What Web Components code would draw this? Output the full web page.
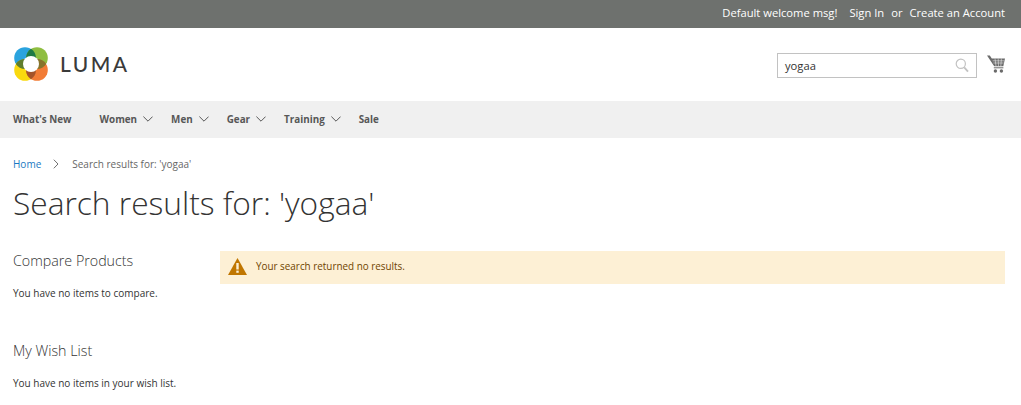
<!DOCTYPE html>
<html lang="en">
<head>
<meta charset="utf-8">
<title>Search results</title>
<style>
  html, body { margin: 0; padding: 0; background: #fff; overflow: hidden; }
  body { font-family: "Open Sans", sans-serif; color: #333; font-size: 10px; width: 1021px; height: 405px; }
</style>
</head>
<body>
<luma-topbar></luma-topbar>
<luma-header></luma-header>
<luma-nav></luma-nav>
<luma-main></luma-main>

<script>
class LumaTopbar extends HTMLElement {
  connectedCallback() {
    this.attachShadow({ mode: "open" }).innerHTML = `
    <style>
      :host {
        display: flex;
        justify-content: flex-end;
        align-items: center;
        box-sizing: border-box;
        height: 28px;
        padding: 0 16px 3px 0;
        background: #6e716e;
        color: #fff;
        font-size: 11.2px;
      }
      span { white-space: pre; }
      .or { margin: 0 7px; }
      .welcome { margin-right: 12px; }
    </style>
    <span class="welcome">Default welcome msg!</span>
    <span>Sign In</span><span class="or">or</span><span>Create an Account</span>`;
  }
}

class LumaLogo extends HTMLElement {
  connectedCallback() {
    this.attachShadow({ mode: "open" }).innerHTML = `
    <style>
      :host { display: flex; align-items: center; gap: 12px; margin-top: -2px; }
      svg { display: block; margin-left: 1px; }
      .word {
        font-family: "Lato", sans-serif;
        font-size: 21px;
        letter-spacing: 2.5px;
        color: #3a3a3a;
        font-weight: 500;
        line-height: 30px;
      }
    </style>
    <svg width="34" height="34" viewBox="0 0 34 34">
      <circle cx="11" cy="11" r="10.8" fill="#2aa3de"/>
      <circle cx="23" cy="11" r="10.8" fill="#8fbe41"/>
      <circle cx="11" cy="23" r="10.8" fill="#f9d90f"/>
      <circle cx="23" cy="23" r="10.8" fill="#f27c36"/>
      <path d="M1.8 17A11 11 0 0 1 20.2 17 11 11 0 0 1 1.8 17" fill="#5f7d2d"/>
      <path d="M13.8 17A11 11 0 0 1 32.2 17 11 11 0 0 1 13.8 17" fill="#86742c"/>
      <path d="M17 1.8A11 11 0 0 1 17 20.2 11 11 0 0 1 17 1.8" fill="#1e7a45"/>
      <path d="M17 13.8A11 11 0 0 1 17 32.2 11 11 0 0 1 17 13.8" fill="#a4532a"/>
      <circle cx="17" cy="17" r="8" fill="#fff"/>
    </svg>
    <span class="word">LUMA</span>`;
  }
}

class LumaSearch extends HTMLElement {
  connectedCallback() {
    this.attachShadow({ mode: "open" }).innerHTML = `
    <style>
      :host {
        display: flex;
        align-items: center;
        justify-content: space-between;
        box-sizing: border-box;
        width: 200px;
        height: 25px;
        margin-top: 2px;
        padding: 0 7px;
        border: 1px solid #c2c2c2;
        background: #fff;
        font-size: 11.2px;
        color: #333;
      }
      svg { display: block; }
    </style>
    <span>yogaa</span>
    <svg width="14" height="15" viewBox="0 0 14 15" fill="none" stroke="#c2c2c2">
      <circle cx="5.8" cy="5.8" r="4.6" stroke-width="1.2"/>
      <path d="M9.2 9.4 13 13.6" stroke-width="1.8"/>
    </svg>`;
  }
}

class LumaCart extends HTMLElement {
  connectedCallback() {
    this.attachShadow({ mode: "open" }).innerHTML = `
    <style>
      :host { display: block; width: 18px; height: 18px; }
      svg { display: block; }
    </style>
    <svg width="18" height="18" viewBox="0 0 18 18">
      <path d="M0 .6h2.8l2 3h13.2l-1.7 7.6H7.2z" fill="#6b6b6b"/>
      <path d="M5.6 5.8h11.6M6.4 8h10.3M8 3.6l1 7.6M11.2 3.6l.3 7.6M14.4 3.6l-.6 7.6" stroke="#fff" stroke-width=".5" fill="none"/>
      <path d="M6.8 12.8h9.6" stroke="#6b6b6b" stroke-width="1"/>
      <circle cx="8.4" cy="16" r="1.7" fill="#6b6b6b"/>
      <circle cx="14.4" cy="16" r="1.7" fill="#6b6b6b"/>
    </svg>`;
  }
}

class LumaHeader extends HTMLElement {
  connectedCallback() {
    this.attachShadow({ mode: "open" }).innerHTML = `
    <style>
      :host {
        display: flex;
        align-items: center;
        height: 73px;
        padding: 0 16px 0 13px;
        box-sizing: border-box;
      }
      luma-logo { margin-right: auto; }
      luma-cart { margin-left: 10px; margin-top: -1px; }
    </style>
    <luma-logo></luma-logo>
    <luma-search></luma-search>
    <luma-cart></luma-cart>`;
  }
}

class LumaNavItem extends HTMLElement {
  connectedCallback() {
    const sub = this.hasAttribute("sub");
    this.attachShadow({ mode: "open" }).innerHTML = `
    <style>
      :host {
        display: inline-flex;
        align-items: center;
        gap: 6px;
        font-weight: 700;
        font-size: 9.85px;
        color: #575757;
      }
      svg { display: block; margin-top: 1px; }
    </style>
    <slot></slot>
    ${sub ? `<svg width="10" height="6" viewBox="0 0 10 6" fill="none" stroke="#575757" stroke-width="1"><path d="M.4 .6 5 5.2 9.6 .6"/></svg>` : ""}`;
  }
}

class LumaNav extends HTMLElement {
  connectedCallback() {
    this.attachShadow({ mode: "open" }).innerHTML = `
    <style>
      :host {
        display: flex;
        align-items: center;
        gap: 18px;
        box-sizing: border-box;
        height: 37px;
        padding: 0 0 2px 13px;
        background: #f0f0f0;
      }
      .first { margin-right: 10px; }
    </style>
    <luma-nav-item class="first">What's New</luma-nav-item>
    <luma-nav-item sub>Women</luma-nav-item>
    <luma-nav-item sub>Men</luma-nav-item>
    <luma-nav-item sub>Gear</luma-nav-item>
    <luma-nav-item sub>Training</luma-nav-item>
    <luma-nav-item>Sale</luma-nav-item>`;
  }
}

class LumaBreadcrumb extends HTMLElement {
  connectedCallback() {
    this.attachShadow({ mode: "open" }).innerHTML = `
    <style>
      :host {
        display: flex;
        align-items: center;
        font-size: 10px;
        color: #666;
        height: 16px;
      }
      a { color: #1979c3; }
      svg { margin: 0 13px 0 12px; display: block; }
    </style>
    <a>Home</a>
    <svg width="6" height="10" viewBox="0 0 6 10" fill="none" stroke="#707070"><path d="M.8 .7 5 5 .8 9.3"/></svg>
    <span>Search results for: 'yogaa'</span>`;
  }
}

class LumaSideBlock extends HTMLElement {
  connectedCallback() {
    this.attachShadow({ mode: "open" }).innerHTML = `
    <style>
      :host { display: block; }
      h2 {
        margin: 0 0 15px;
        font-size: 14.25px;
        font-weight: 300;
        line-height: 20px;
        color: #333;
      }
      p { margin: 0; font-size: 10px; line-height: 14px; color: #333; }
    </style>
    <h2>${this.getAttribute("title")}</h2>
    <p><slot></slot></p>`;
  }
}

class LumaNotice extends HTMLElement {
  connectedCallback() {
    this.attachShadow({ mode: "open" }).innerHTML = `
    <style>
      :host {
        display: flex;
        align-items: center;
        gap: 9px;
        height: 33px;
        padding-left: 8px;
        background: #fdf0d5;
        color: #6f4400;
        font-size: 9.9px;
      }
      svg { display: block; margin-top: -2px; }
      span { margin-top: -3px; }
    </style>
    <svg width="19" height="17" viewBox="0 0 19 17">
      <path d="M9.5 0 19 17H0z" fill="#c07600"/>
      <rect x="8.3" y="5" width="2.4" height="6.5" fill="#fdf0d5"/>
      <rect x="8.3" y="12.6" width="2.4" height="2.2" fill="#fdf0d5"/>
    </svg>
    <span><slot></slot></span>`;
  }
}

class LumaMain extends HTMLElement {
  connectedCallback() {
    this.attachShadow({ mode: "open" }).innerHTML = `
    <style>
      :host { display: block; padding: 18px 16px 0 13px; }
      h1 {
        margin: 9px 0 0;
        font-size: 31.7px;
        font-weight: 300;
        line-height: 44px;
        color: #333;
      }
      .cols {
        display: grid;
        grid-template-columns: 207px 1fr;
        margin-top: 26px;
      }
      .side { display: flex; flex-direction: column; gap: 41px; }
    </style>
    <luma-breadcrumb></luma-breadcrumb>
    <h1>Search results for: 'yogaa'</h1>
    <div class="cols">
      <div class="side">
        <luma-side-block title="Compare Products">You have no items to compare.</luma-side-block>
        <luma-side-block title="My Wish List">You have no items in your wish list.</luma-side-block>
      </div>
      <div><luma-notice>Your search returned no results.</luma-notice></div>
    </div>`;
  }
}

customElements.define("luma-topbar", LumaTopbar);
customElements.define("luma-logo", LumaLogo);
customElements.define("luma-search", LumaSearch);
customElements.define("luma-cart", LumaCart);
customElements.define("luma-header", LumaHeader);
customElements.define("luma-nav-item", LumaNavItem);
customElements.define("luma-nav", LumaNav);
customElements.define("luma-breadcrumb", LumaBreadcrumb);
customElements.define("luma-side-block", LumaSideBlock);
customElements.define("luma-notice", LumaNotice);
customElements.define("luma-main", LumaMain);
</script>
</body>
</html>
